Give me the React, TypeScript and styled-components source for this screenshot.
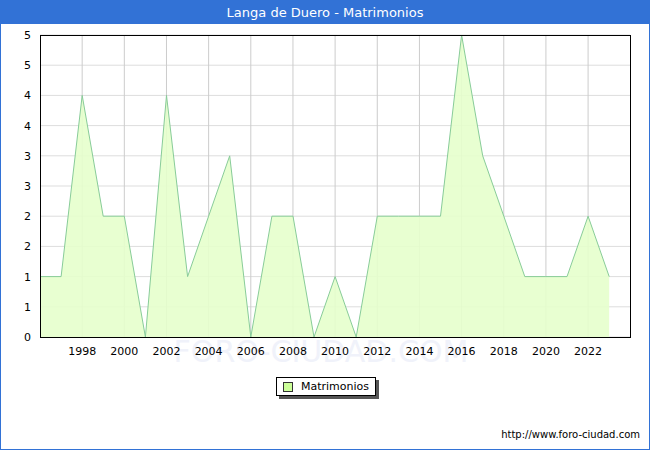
import React from "react";
import styled, { createGlobalStyle } from "styled-components";

const Global = createGlobalStyle`
  html, body { margin: 0; padding: 0; background: #fff; }
  body { font-family: "DejaVu Sans", Verdana, sans-serif; }
`;

const Frame = styled.div`
  width: 650px; height: 450px; box-sizing: border-box;
  border: 1px solid #3272d6; display: flex; flex-direction: column; background: #fff;
`;
const Title = styled.div`
  height: 23px; background: #3272d6; color: #fff; font-size: 13px;
  display: flex; align-items: center; justify-content: center; flex-shrink: 0;
`;
const ChartSvg = styled.svg`
  display: block; flex-shrink: 0;
`;
const LegendRow = styled.div`
  display: flex; justify-content: center; padding-left: 2px; margin-top: 13px;
`;
const LegendBox = styled.div`
  display: flex; align-items: center; gap: 8px; height: 17px; padding: 0 6px 0 6px;
  border: 1px solid #000; box-shadow: 3px 3px 0 #555; font-size: 11px; color: #000;
`;
const Swatch = styled.span`
  width: 8px; height: 8px; border: 1px solid #333; background: #ccff99;
`;
const Footer = styled.div`
  margin-top: auto; padding: 0 9px 9px 0; text-align: right; font-size: 10px; color: #000;
`;

const data = [1,1,4,2,2,0,4,1,2,3,0,2,2,0,1,0,2,2,2,2,5,3,2,1,1,1,2,1];
const X0 = 39, DX = 21.08, YB = 313, DY = 30.2;
const px = (i: number) => X0 + i * DX;
const py = (v: number) => YB - v * 2 * DY;

export default function App() {
  const pts = data.map((v, i) => `${px(i).toFixed(1)},${py(v).toFixed(1)}`).join(" ");
  const area = `${px(0)},${YB} ${pts} ${px(data.length - 1)},${YB}`;
  const yl = ["0","1","1","2","2","3","3","4","4","5","5"];
  return (
    <>
      <Global />
      <Frame>
        <Title>Langa de Duero - Matrimonios</Title>
        <ChartSvg width={648} height={340} viewBox="0 0 648 340">
          <text x={320} y={338} fontSize={30} fill="#f0f2fa" textAnchor="middle" fontFamily="DejaVu Sans">FORO-CIUDAD.COM</text>
          {yl.map((_, k) => (
            <line key={k} x1={X0} x2={629} y1={YB - k * DY} y2={YB - k * DY} stroke="#dddddd" />
          ))}
          {Array.from({ length: 13 }, (_, k) => (
            <line key={k} x1={px(2 + 2 * k)} x2={px(2 + 2 * k)} y1={11} y2={YB} stroke="#cccccc" />
          ))}
          <polygon points={area} fill="#e6ffcc" opacity={0.9} />
          <polyline points={pts} fill="none" stroke="#88cc99" strokeWidth={1} />
          <rect x={X0 + 0.5} y={11.5} width={590} height={302} fill="none" stroke="#000" />
          {yl.map((t, k) => (
            <text key={k} x={30} y={YB - k * DY + 4} fontSize={11} textAnchor="end" fill="#000" fontFamily="DejaVu Sans">{t}</text>
          ))}
          {Array.from({ length: 13 }, (_, k) => (
            <text key={k} x={px(2 + 2 * k)} y={331} fontSize={11} textAnchor="middle" fill="#000" fontFamily="DejaVu Sans">{1998 + 2 * k}</text>
          ))}
        </ChartSvg>
        <LegendRow>
          <LegendBox><Swatch />Matrimonios</LegendBox>
        </LegendRow>
        <Footer>http://www.foro-ciudad.com</Footer>
      </Frame>
    </>
  );
}
